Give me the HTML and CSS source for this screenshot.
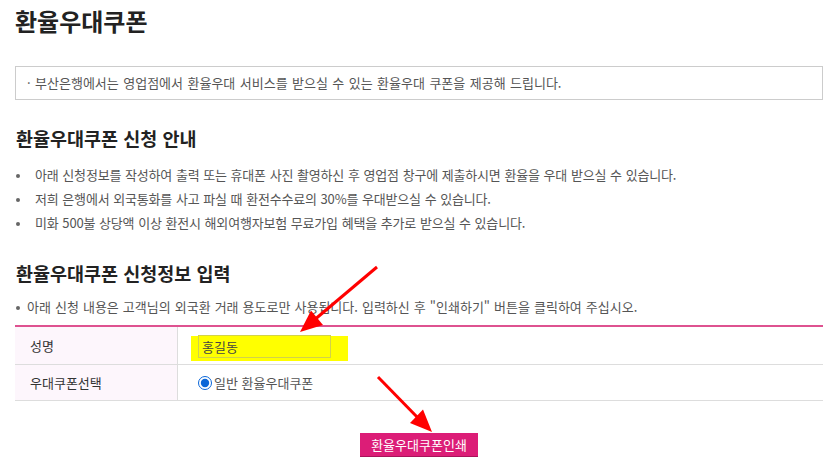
FILE: index.html
```html
<!DOCTYPE html>
<html lang="ko">
<head>
  <meta charset="UTF-8">
  <title>환율우대쿠폰</title>
  <link rel="stylesheet" href="styles.css">
</head>
<body>

<div class="page">
  <h1 class="title">환율우대쿠폰</h1>

  <div class="intro-box">· 부산은행에서는 영업점에서 환율우대 서비스를 받으실 수 있는 환율우대 쿠폰을 제공해 드립니다.</div>

  <h2 class="sub-title">환율우대쿠폰 신청 안내</h2>
  <ul class="dot-list">
    <li>아래 신청정보를 작성하여 출력 또는 휴대폰 사진 촬영하신 후 영업점 창구에 제출하시면 환율을 우대 받으실 수 있습니다.</li>
    <li>저희 은행에서 외국통화를 사고 파실 때 환전수수료의 30%를 우대받으실 수 있습니다.</li>
    <li>미화 500불 상당액 이상 환전시 해외여행자보험 무료가입 혜택을 추가로 받으실 수 있습니다.</li>
  </ul>

  <h2 class="sub-title">환율우대쿠폰 신청정보 입력</h2>
  <ul class="dot-list note">
    <li>아래 신청 내용은 고객님의 외국환 거래 용도로만 사용됩니다. 입력하신 후 "인쇄하기" 버튼을 클릭하여 주십시오.</li>
  </ul>

  <div class="form-table">
    <div class="form-row name-row">
      <div class="form-th">성명</div>
      <div class="form-td">
        <span class="highlight"><input type="text" class="name-input" value="홍길동"></span>
      </div>
    </div>
    <div class="form-row">
      <div class="form-th">우대쿠폰선택</div>
      <div class="form-td">
        <label class="radio-label"><input type="radio" name="coupon" checked> 일반 환율우대쿠폰</label>
      </div>
    </div>
  </div>

  <div class="btn-area">
    <button class="print-btn">환율우대쿠폰인쇄</button>
  </div>
</div>

<svg class="arrows" width="828" height="471" viewBox="0 0 828 471">
  <line x1="377" y1="267" x2="313" y2="321" stroke="#ff0000" stroke-width="3"/>
  <polygon points="300,332 311,310.5 323,325" fill="#ff0000"/>
  <line x1="378" y1="377" x2="420" y2="420" stroke="#ff0000" stroke-width="3"/>
  <polygon points="432,432 410,423 423,409.5" fill="#ff0000"/>
</svg>

</body>
</html>
```

FILE: styles.css
```css
body {
  margin: 0;
  padding: 0;
  font-family: "Noto Sans CJK KR", "Noto Sans", sans-serif;
  color: #555;
  background: #fff;
}
.page {
  padding: 0 5px 0 15px;
}
.title {
  margin: 0;
  padding-top: 5px;
  font-size: 24px;
  line-height: 32px;
  font-weight: 700;
  color: #222;
}
.intro-box {
  margin-top: 29px;
  border: 1px solid #ccc;
  padding: 0 11px;
  font-size: 13px;
  line-height: 32px;
  word-spacing: 0.8px;
  color: #555;
}
.sub-title {
  margin: 24px 0 0 1px;
  font-size: 18.5px;
  line-height: 28px;
  font-weight: 700;
  color: #222;
}
.dot-list {
  list-style: none;
  margin: 11px 0 0;
  padding: 0;
  font-size: 13px;
  line-height: 24px;
  word-spacing: 0.4px;
  letter-spacing: -0.2px;
}
.dot-list li {
  position: relative;
  padding-left: 20px;
}
.dot-list li::before {
  content: "";
  position: absolute;
  left: 1px;
  top: 11px;
  width: 4px;
  height: 4px;
  border-radius: 50%;
  background: #666;
}
.dot-list.note {
  margin-top: 8px;
  letter-spacing: 0;
}
.dot-list.note li {
  padding-left: 12px;
}
.form-table {
  margin-top: 6px;
  border-top: 2px solid #de5290;
}
.form-row {
  display: flex;
  height: 35px;
  border-bottom: 1px solid #ddd;
}
.form-row.name-row {
  height: 37px;
}
.form-th {
  box-sizing: border-box;
  width: 163px;
  padding-left: 15px;
  display: flex;
  align-items: center;
  background: #fdf6fc;
  border-right: 1px solid #ddd;
  font-size: 13px;
  color: #333;
}
.form-td {
  flex: 1;
  display: flex;
  align-items: center;
  padding-left: 20px;
  font-size: 13px;
}
.highlight {
  position: relative;
  display: inline-block;
  margin-top: 1px;
}
.highlight::before {
  content: "";
  position: absolute;
  left: -7px;
  top: 1px;
  width: 157px;
  height: 25px;
  background: #ffff00;
}
.name-input {
  position: relative;
  box-sizing: border-box;
  width: 133px;
  height: 23px;
  margin: 0;
  padding: 0 3px;
  border: 1px solid #d2d24a;
  background: transparent;
  font-family: "Noto Sans CJK KR", sans-serif;
  font-size: 13px;
  color: #444;
}
.radio-label {
  display: flex;
  align-items: center;
  color: #555;
}
.radio-label input {
  width: 14px;
  height: 14px;
  margin: 0 2px 0 0;
  accent-color: #0a66d8;
}
.btn-area {
  text-align: center;
  margin-top: 30px;
}
.print-btn {
  height: 24px;
  width: 118px;
  padding: 0;
  border: none;
  border-bottom: 1px solid #a8135a;
  background: #dc1d77;
  color: #fff;
  font-family: "Noto Sans CJK KR", sans-serif;
  font-size: 13px;
  cursor: pointer;
}
.arrows {
  position: absolute;
  left: 0;
  top: 0;
  pointer-events: none;
}
```
